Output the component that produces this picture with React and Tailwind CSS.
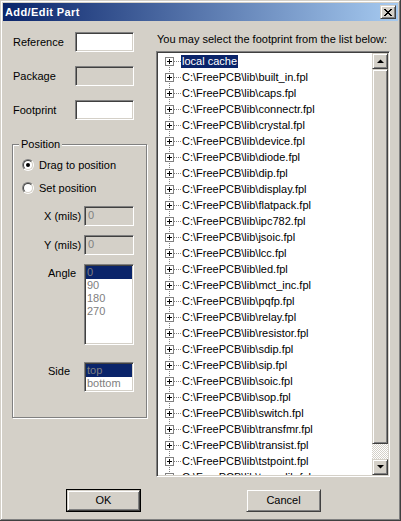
import React from "react";

const FILES = [
  "built_in", "caps", "connectr", "crystal", "device", "diode", "dip", "display",
  "flatpack", "ipc782", "jsoic", "lcc", "led", "mct_inc", "pqfp", "relay",
  "resistor", "sdip", "sip", "soic", "sop", "switch", "transfmr", "transist",
  "tstpoint", "tsop_lib",
];

const sunken =
  "border border-t-[#808080] border-l-[#808080] border-r-white border-b-white shadow-[inset_1px_1px_#404040,inset_-1px_-1px_#d4d0c8]";
const raised =
  "border border-t-[#d4d0c8] border-l-[#d4d0c8] border-r-[#404040] border-b-[#404040] shadow-[inset_1px_1px_#fff,inset_-1px_-1px_#808080]";

function Expander({ first }) {
  return (
    <svg width="20" height="16" className="shrink-0">
      {!first && <line x1="8.5" y1="0" x2="8.5" y2="4" stroke="#808080" strokeDasharray="1 1" />}
      <line x1="8.5" y1="12" x2="8.5" y2="16" stroke="#808080" strokeDasharray="1 1" />
      <line x1="13" y1="8.5" x2="20" y2="8.5" stroke="#808080" strokeDasharray="1 1" />
      <rect x="4.5" y="4.5" width="8" height="8" fill="#fff" stroke="#808080" />
      <line x1="6" y1="8.5" x2="11" y2="8.5" stroke="#000" />
      <line x1="8.5" y1="6" x2="8.5" y2="11" stroke="#000" />
    </svg>
  );
}

function Radio({ checked, label }) {
  return (
    <div className="flex items-center h-[14px]">
      <div className="w-[12px] h-[12px] rounded-full border border-t-[#808080] border-l-[#808080] border-r-white border-b-white flex items-center justify-center">
        <div className="w-[10px] h-[10px] rounded-full bg-white border border-t-[#404040] border-l-[#404040] border-r-[#d4d0c8] border-b-[#d4d0c8] flex items-center justify-center">
          {checked && <div className="w-[4px] h-[4px] rounded-full bg-black" />}
        </div>
      </div>
      <span className="ml-[5px]">{label}</span>
    </div>
  );
}

function ListBox({ items, h }) {
  return (
    <div className={`w-[50px] bg-white ${sunken} p-[1px]`} style={{ height: h }}>
      {items.map((it, i) => (
        <div
          key={it}
          className={`h-[13px] leading-[13px] pl-[1px] text-[#808080] ${i === 0 ? "bg-[#0a246a]" : ""}`}
        >
          {it}
        </div>
      ))}
    </div>
  );
}

function Arrow({ down }) {
  return (
    <svg width="7" height="4">
      <polygon points={down ? "0,0 7,0 3.5,3.5" : "0,4 7,4 3.5,0.5"} fill="#000" />
    </svg>
  );
}

export default function App() {
  return (
    <div className="w-[401px] h-[521px] bg-[#d4d0c8] p-[3px] flex flex-col font-['Liberation_Sans',Arial,sans-serif] text-[11px] text-black shadow-[inset_-1px_-1px_#404040,inset_1px_1px_#d4d0c8,inset_-2px_-2px_#808080,inset_2px_2px_#fff] overflow-hidden">
      {/* title bar */}
      <div className="h-[18px] shrink-0 flex items-center justify-between pl-[2px] pr-[2px] bg-[linear-gradient(to_right,#0a246a,#a6caf0)]">
        <span className="text-white font-bold tracking-[0.4px]">Add/Edit Part</span>
        <div className={`w-[16px] h-[14px] bg-[#d4d0c8] ${raised} flex items-center justify-center`}>
          <svg width="8" height="7">
            <path d="M0 0L7 7M1 0L8 7M7 0L0 7M8 0L1 7" stroke="#000" strokeWidth="1" />
          </svg>
        </div>
      </div>

      <div className="flex items-start">
        {/* left column */}
        <div className="ml-[9px] w-[135px] flex flex-col">
          {["Reference", "Package", "Footprint"].map((l, i) => (
            <div key={l} className={`flex items-center h-[20px] ${i === 0 ? "mt-[11px]" : "mt-[14px]"}`}>
              <span className="w-[63px] pl-[1px]">{l}</span>
              <div className={`w-[59px] h-[20px] ${sunken} ${i === 1 ? "bg-[#d4d0c8]" : "bg-white"}`} />
            </div>
          ))}

          <div className="relative mt-[24px] h-[274px] border border-[#808080] shadow-[inset_1px_1px_#fff,1px_1px_#fff] flex flex-col">
            <span className="absolute -top-[8px] left-[6px] px-[2px] bg-[#d4d0c8] leading-[14px]">Position</span>
            <div className="mt-[13px] pl-[9px]">
              <Radio checked label="Drag to position" />
            </div>
            <div className="mt-[9px] pl-[9px]">
              <Radio label="Set position" />
            </div>
            {["X (mils)", "Y (mils)"].map((l, i) => (
              <div key={l} className={`flex items-center h-[20px] ${i === 0 ? "mt-[11px]" : "mt-[9px]"}`}>
                <span className="w-[71px] pl-[31px]">{l}</span>
                <div className={`w-[50px] h-[20px] ${sunken} bg-[#d4d0c8] text-[#808080] pl-[3px] leading-[17px]`}>0</div>
              </div>
            ))}
            <div className="flex items-start mt-[9px]">
              <span className="w-[71px] pl-[35px] pt-[1px]">Angle</span>
              <ListBox items={["0", "90", "180", "270"]} h={81} />
            </div>
            <div className="flex items-start mt-[17px]">
              <span className="w-[71px] pl-[35px] pt-[1px]">Side</span>
              <ListBox items={["top", "bottom"]} h={30} />
            </div>
          </div>
        </div>

        {/* right column */}
        <div className="ml-[9px] w-[234px] flex flex-col">
          <div className="mt-[12px] h-[13px] leading-[13px] pl-[1px]">You may select the footprint from the list below:</div>
          <div className={`mt-[5px] h-[426px] bg-white ${sunken} p-[1px] flex`}>
            <div className="flex-1 overflow-hidden pl-[3px]">
              <div className="flex items-center h-[16px]">
                <Expander first />
                <span className="bg-[#0a246a] text-white px-[1px] leading-[13px] h-[13px]">local cache</span>
              </div>
              {FILES.map((f) => (
                <div key={f} className="flex items-center h-[16px]">
                  <Expander />
                  <span className="px-[1px] whitespace-nowrap">{`C:\\FreePCB\\lib\\${f}.fpl`}</span>
                </div>
              ))}
            </div>
            <div className="w-[16px] flex flex-col shrink-0">
              <div className={`h-[16px] bg-[#d4d0c8] ${raised} flex items-center justify-center`}>
                <Arrow />
              </div>
              <div className={`h-[375px] bg-[#d4d0c8] ${raised}`} />
              <div className="flex-1 bg-[repeating-conic-gradient(#fff_0%_25%,#d4d0c8_0%_50%)] bg-[length:2px_2px]" />
              <div className={`h-[16px] bg-[#d4d0c8] ${raised} flex items-center justify-center`}>
                <Arrow down />
              </div>
            </div>
          </div>
        </div>
      </div>

      {/* buttons */}
      <div className="flex mt-[12px]">
        <div className="ml-[63px] w-[75px] h-[23px] border border-black">
          <div className={`w-full h-full bg-[#d4d0c8] ${raised} flex items-center justify-center`}>OK</div>
        </div>
        <div className={`ml-[105px] w-[75px] h-[23px] bg-[#d4d0c8] ${raised} flex items-center justify-center`}>Cancel</div>
      </div>
    </div>
  );
}
